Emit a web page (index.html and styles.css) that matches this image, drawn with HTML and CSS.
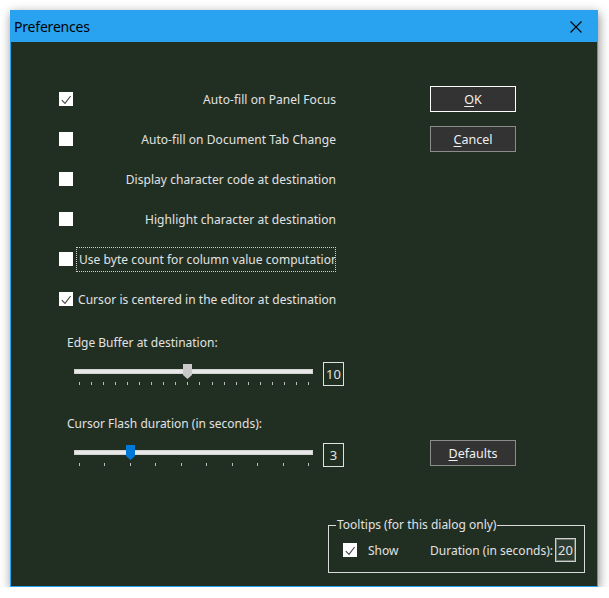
FILE: index.html
```html
<!DOCTYPE html>
<html>
<head>
<meta charset="utf-8">
<title>Preferences</title>
<link rel="stylesheet" href="styles.css">
</head>
<body>
<div class="window">
  <div class="titlebar">
    <span class="title">Preferences</span>
    <svg class="close" width="12" height="12" viewBox="0 0 12 12"><path d="M0.5 0.5 L11.5 11.5 M11.5 0.5 L0.5 11.5" stroke="#000" stroke-width="1.1" fill="none"/></svg>
  </div>
  <div class="content">
    <div class="options">
      <div class="opt right">
        <span class="cb"><svg width="14" height="14" viewBox="0 0 14 14"><path d="M2.8 8.2 L6 11.4 L11.6 4" stroke="#4a4a4a" stroke-width="1.2" fill="none"/></svg></span>
        <span class="lbl">Auto-fill on Panel Focus</span>
      </div>
      <div class="btn default"><u>O</u>K</div>
      <div class="opt right">
        <span class="cb"></span>
        <span class="lbl">Auto-fill on Document Tab Change</span>
      </div>
      <div class="btn"><u>C</u>ancel</div>
      <div class="opt right">
        <span class="cb"></span>
        <span class="lbl">Display character code at destination</span>
      </div>
      <div></div>
      <div class="opt right">
        <span class="cb"></span>
        <span class="lbl">Highlight character at destination</span>
      </div>
      <div></div>
      <div class="opt">
        <span class="cb"></span>
        <span class="lbl focus">Use byte count for column value computation</span>
      </div>
      <div></div>
      <div class="opt">
        <span class="cb"><svg width="14" height="14" viewBox="0 0 14 14"><path d="M2.8 8.2 L6 11.4 L11.6 4" stroke="#4a4a4a" stroke-width="1.2" fill="none"/></svg></span>
        <span class="lbl left">Cursor is centered in the editor at destination</span>
      </div>
      <div></div>
    </div>

    <div class="slabel first">Edge Buffer at destination:</div>
    <div class="slider-row">
      <div class="slider">
        <div class="track"></div>
        <div class="ticks">
          <i></i><i></i><i></i><i></i><i></i><i></i><i></i><i></i><i></i><i></i>
          <i></i><i></i><i></i><i></i><i></i><i></i><i></i><i></i><i></i><i></i>
        </div>
        <div class="lane">
          <svg class="thumb" style="left:47.37%" width="9" height="15" viewBox="0 0 9 15"><path d="M0 0 H9 V11 L4.5 15 L0 11 Z" fill="#c9c9c9"/></svg>
        </div>
      </div>
      <div class="valbox">10</div>
    </div>

    <div class="slabel second">Cursor Flash duration (in seconds):</div>
    <div class="slider-row">
      <div class="slider">
        <div class="track"></div>
        <div class="ticks">
          <i></i><i></i><i></i><i></i><i></i><i></i><i></i><i></i><i></i><i></i>
        </div>
        <div class="lane">
          <svg class="thumb" style="left:22.22%" width="9" height="15" viewBox="0 0 9 15"><path d="M0 0 H9 V11 L4.5 15 L0 11 Z" fill="#0078d7"/></svg>
        </div>
      </div>
      <div class="valbox">3</div>
      <div class="btn defaults"><u>D</u>efaults</div>
    </div>

    <fieldset class="group">
      <legend>Tooltips (for this dialog only)</legend>
      <div class="group-row">
        <span class="cb"><svg width="14" height="14" viewBox="0 0 14 14"><path d="M2.8 8.2 L6 11.4 L11.6 4" stroke="#4a4a4a" stroke-width="1.2" fill="none"/></svg></span>
        <span class="show">Show</span>
        <span class="dur">Duration (in seconds):</span>
        <span class="valbox edit">20</span>
      </div>
    </fieldset>
  </div>
</div>
</body>
</html>
```
FILE: styles.css
```css
* { box-sizing: border-box; }
html, body { margin: 0; padding: 0; background: #ffffff; }
body {
  font-family: "Noto Sans", "Open Sans", sans-serif;
  font-size: 12px;
  color: #e2e2e2;
}
.window {
  margin: 10px 0 0 10px;
  width: 588px;
  height: 577px;
  border: 1px solid #29a3f0;
  background: #212f23;
  box-shadow: 1px 3px 10px rgba(0, 0, 0, 0.45);
  display: flex;
  flex-direction: column;
}
.titlebar {
  height: 31px;
  background: #29a3f0;
  display: flex;
  align-items: center;
  justify-content: space-between;
  padding: 0 15px 0 3px;
  color: #000;
}
.title { font-size: 14px; letter-spacing: -0.2px; }
.close { display: block; margin-top: 1px; }
.content { flex: 1; }

.options {
  display: grid;
  grid-template-columns: 277px 86px;
  grid-auto-rows: 40px;
  column-gap: 94px;
  align-items: center;
  margin: 37px 0 0 48px;
}
.opt { display: flex; align-items: center; height: 40px; }
.opt.right { justify-content: space-between; }
.cb {
  width: 14px; height: 14px; background: #ffffff; flex: none; display: block;
}
.cb svg { display: block; }
.lbl { white-space: nowrap; letter-spacing: 0.05px; }
.lbl.focus {
  margin-left: 3px;
  border: 1px dotted #cfcfcf;
  height: 25px;
  line-height: 23px;
  padding: 0 2px;
  flex: 1;
  overflow: hidden;
}
.lbl.left { margin-left: 5px; }

.btn {
  width: 86px;
  height: 26px;
  background: #333333;
  border: 1px solid #8c8c8c;
  display: flex;
  align-items: center;
  justify-content: center;
  color: #f0f0f0;
  font-size: 12.5px;
}
.btn.default { border-color: #ffffff; }
.btn u { text-underline-offset: 2px; }

.slabel { margin-left: 56px; height: 16px; line-height: 16px; }
.slabel.first { margin-top: 16px; }
.slabel.second { margin-top: 30px; }
.slider-row {
  display: flex;
  align-items: flex-start;
  margin: 11px 0 0 63px;
  height: 24px;
}
.slider { position: relative; width: 239px; height: 24px; flex: none; }
.track {
  margin-top: 7px;
  height: 5px;
  background: #e8e8e8;
  border: 1px solid #d2d2d2;
}
.ticks {
  display: flex;
  justify-content: space-between;
  margin: 8px 4px 0 5px;
  height: 3px;
}
.ticks i { display: block; width: 1px; height: 3px; background: #bdbdbd; }
.lane { position: absolute; top: 2px; left: 5px; right: 5px; height: 15px; }
.thumb { position: absolute; top: 0; margin-left: -4px; display: block; }
.valbox {
  margin-left: 10px;
  width: 21px;
  height: 24px;
  border: 1px solid #e0e0e0;
  display: flex;
  align-items: center;
  justify-content: center;
  font-size: 13px;
  flex: none;
}
.btn.defaults { margin-left: 86px; margin-top: -3px; }

.group {
  margin: 50px 0 0 317px;
  width: 257px;
  border: 1px solid #dadada;
  padding: 5px 8px 10px 0;
  min-width: 0;
}
.group legend {
  margin-left: 7px;
  padding: 0 1px;
  line-height: 16px;
}
.group-row { display: flex; align-items: center; height: 24px; padding-left: 14px; }
.show { margin-left: 11px; }
.dur { margin-left: auto; }
.valbox.edit {
  margin-left: 2px;
  background: #2d3c2f;
  border: 1px solid #cfcfcf;
  box-shadow: inset 0 0 0 1px #6d766e;
}
```
